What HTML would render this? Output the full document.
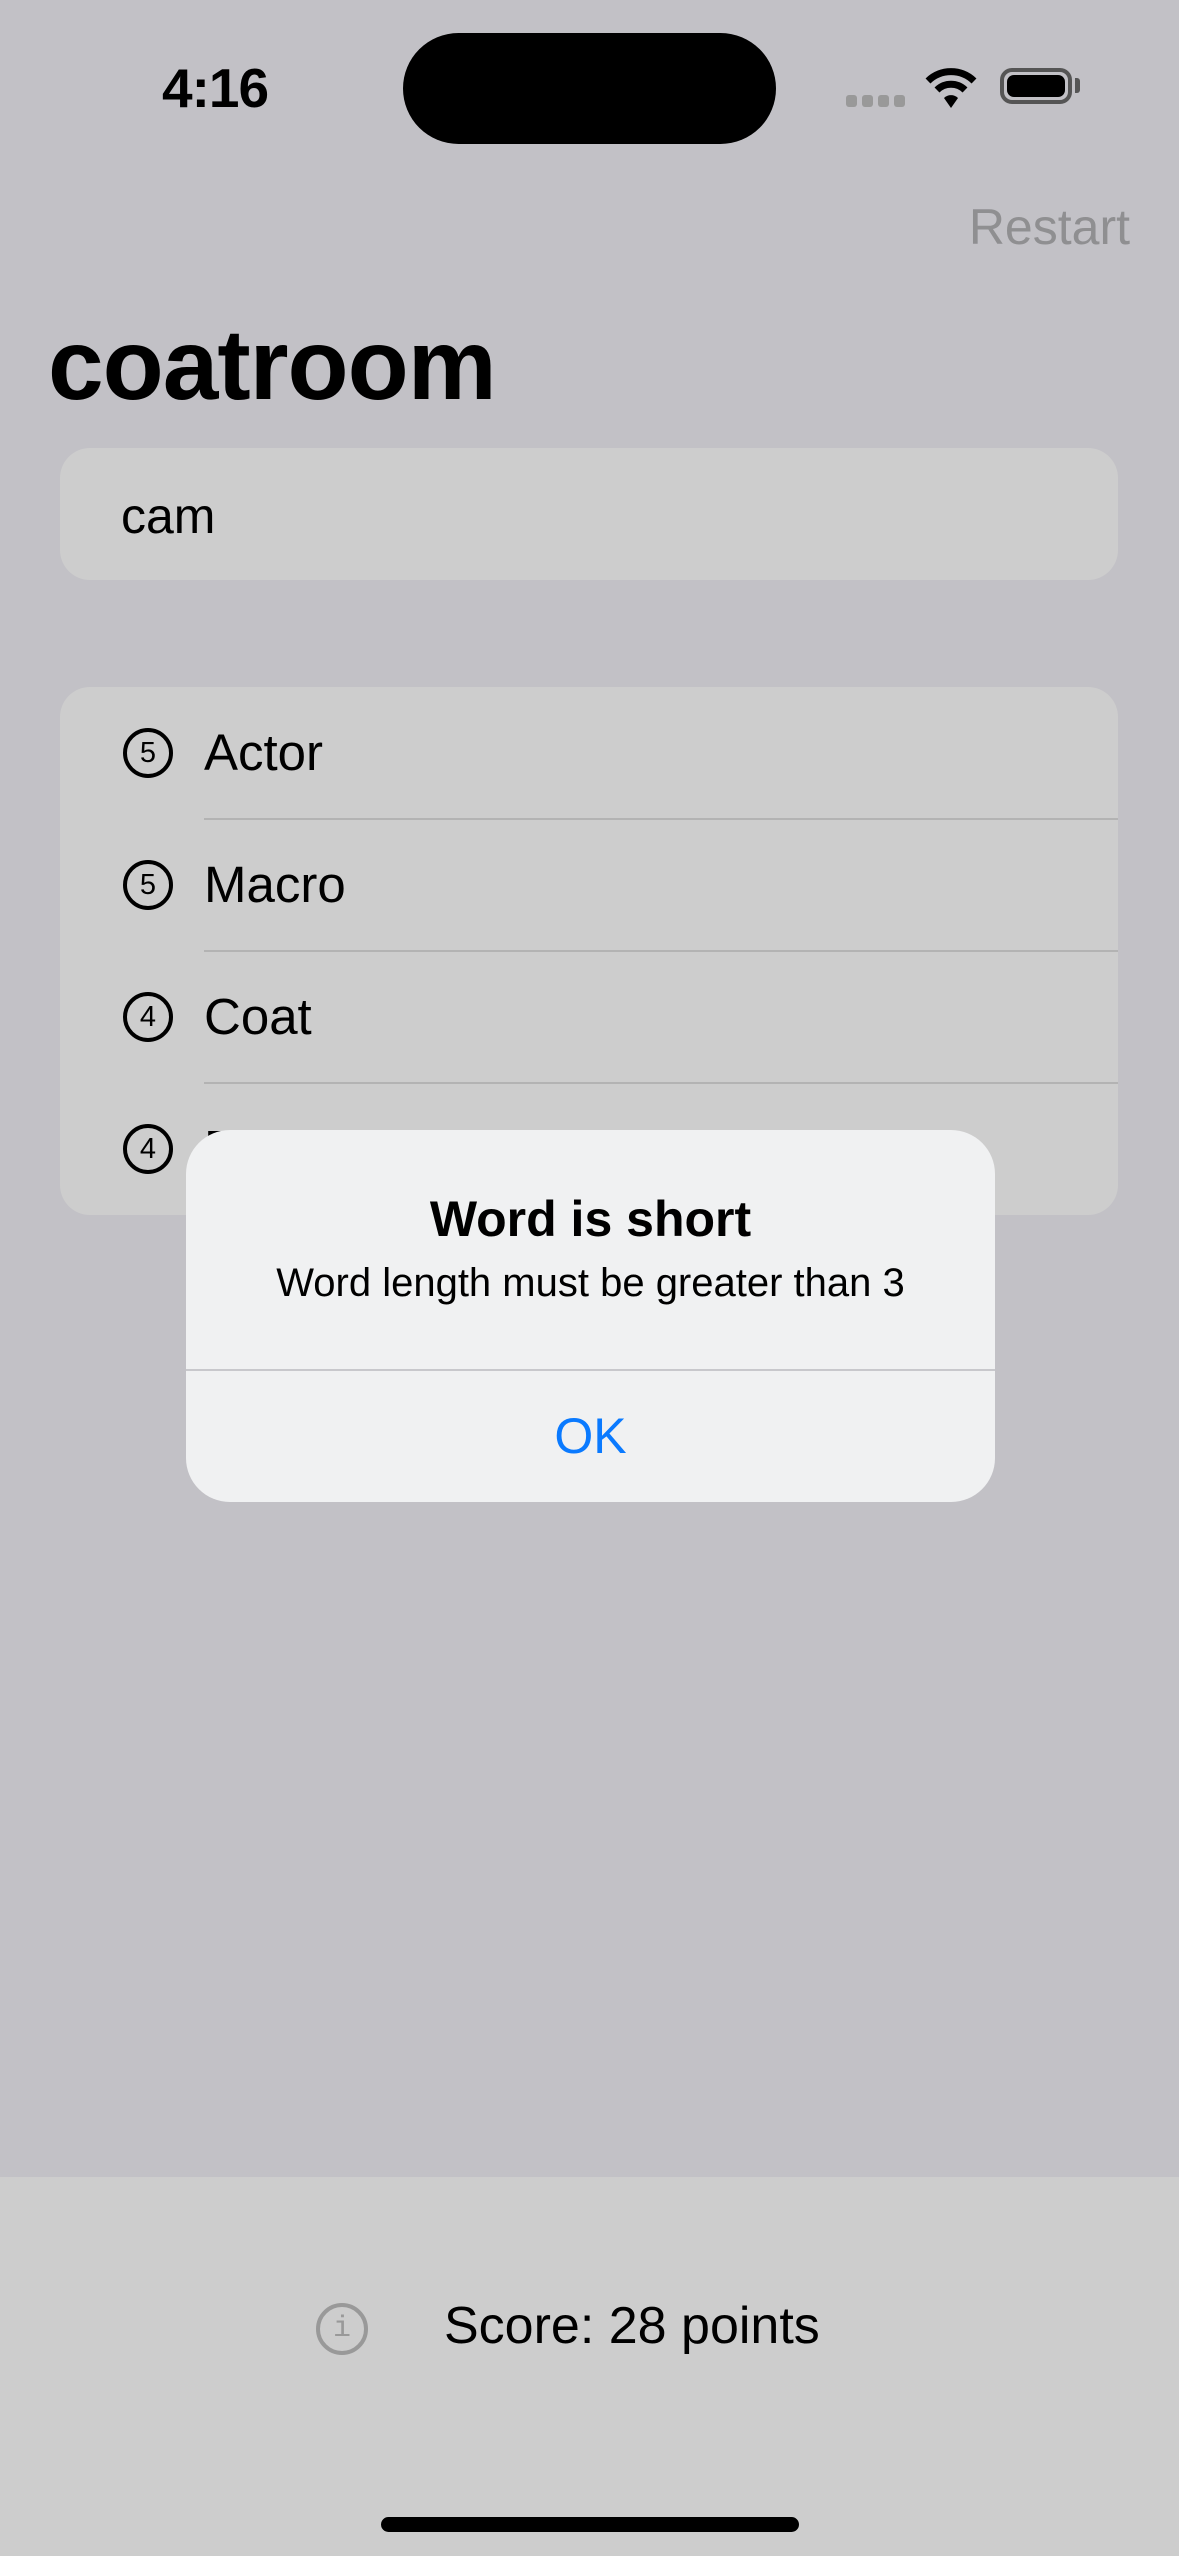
<!DOCTYPE html>
<html><head><meta charset="utf-8"><style>
*{margin:0;padding:0;box-sizing:border-box}
body{width:1179px;height:2556px;background:#c2c1c6;font-family:"Liberation Sans",sans-serif;position:relative;overflow:hidden}
.a{position:absolute}
.row{position:absolute;left:0;right:0;height:132px}
.row .t{position:absolute;left:144px;top:0;line-height:132px;font-size:51px;color:#000}
.row .c{position:absolute;left:63px;top:41px;width:50px;height:50px;border:4px solid #000;border-radius:50%;font-size:29px;line-height:42px;text-align:center}
.sep{position:absolute;left:144px;right:0;height:2px;background:#b3b3b3}
</style></head><body>
<div class="a" style="left:162px;top:56px;font-size:55px;font-weight:bold;letter-spacing:-1px">4:16</div>
<div class="a" style="left:403px;top:33px;width:373px;height:111px;background:#000;border-radius:56px"></div>
<div class="a" style="left:846px;top:95px;width:60px;height:12px">
 <span class="a" style="left:0;width:11px;height:12px;background:#999;border-radius:3px"></span>
 <span class="a" style="left:16px;width:11px;height:12px;background:#999;border-radius:3px"></span>
 <span class="a" style="left:32px;width:11px;height:12px;background:#999;border-radius:3px"></span>
 <span class="a" style="left:48px;width:11px;height:12px;background:#999;border-radius:3px"></span>
</div>
<svg class="a" style="left:924px;top:64px" width="54" height="46" viewBox="0 0 54 46"><path d="M4 17 A33 33 0 0 1 50 17" stroke="#000" stroke-width="7" fill="none"/><path d="M13 26 A20 20 0 0 1 41 26" stroke="#000" stroke-width="7" fill="none"/><path d="M20 34 L27 44 L34 34 A10 10 0 0 0 20 34Z" fill="#000"/></svg>
<div class="a" style="left:1000px;top:68px;width:72px;height:36px;border:4px solid #555;border-radius:12px;padding:3px"><div style="width:100%;height:100%;background:#000;border-radius:7px"></div></div>
<div class="a" style="left:1075px;top:78px;width:5px;height:15px;background:#555;border-radius:0 3px 3px 0"></div>
<div class="a" style="right:49px;top:198px;font-size:50px;color:#8f8f91">Restart</div>
<div class="a" style="left:48px;top:308px;font-size:100px;font-weight:bold;letter-spacing:-1px">coatroom</div>
<div class="a" style="left:60px;top:448px;width:1058px;height:132px;background:#cdcdcd;border-radius:30px"><div class="a" style="left:61px;top:2px;line-height:132px;font-size:50px">cam</div></div>
<div class="a" style="left:60px;top:687px;width:1058px;height:528px;background:#cdcdcd;border-radius:30px;overflow:hidden">
 <div class="row" style="top:0"><div class="c">5</div><div class="t">Actor</div></div>
 <div class="sep" style="top:131px"></div>
 <div class="row" style="top:132px"><div class="c">5</div><div class="t">Macro</div></div>
 <div class="sep" style="top:263px"></div>
 <div class="row" style="top:264px"><div class="c">4</div><div class="t">Coat</div></div>
 <div class="sep" style="top:395px"></div>
 <div class="row" style="top:396px"><div class="c">4</div><div class="t">Room</div></div>
</div>
<div class="a" style="left:186px;top:1130px;width:809px;height:372px;background:#f0f1f2;border-radius:44px;overflow:hidden">
 <div class="a" style="left:0;right:0;top:60px;text-align:center;font-size:50px;font-weight:bold">Word is short</div>
 <div class="a" style="left:0;right:0;top:131px;text-align:center;font-size:40px">Word length must be greater than 3</div>
 <div class="a" style="left:0;right:0;top:239px;height:2px;background:#c8c8cc"></div>
 <div class="a" style="left:0;right:0;top:241px;height:131px;line-height:131px;text-align:center;font-size:50px;color:#0a7aff">OK</div>
</div>
<div class="a" style="left:0;top:2177px;width:1179px;height:379px;background:#cdcdcd"></div>
<div class="a" style="left:316px;top:2303px;width:52px;height:52px;border:4px solid #999;border-radius:50%;text-align:center;color:#999;font-size:30px;line-height:44px;font-family:'Liberation Mono',monospace">i</div>
<div class="a" style="left:444px;top:2296px;font-size:52px">Score: 28 points</div>
<div class="a" style="left:381px;top:2517px;width:418px;height:15px;background:#000;border-radius:8px"></div>
</body></html>
